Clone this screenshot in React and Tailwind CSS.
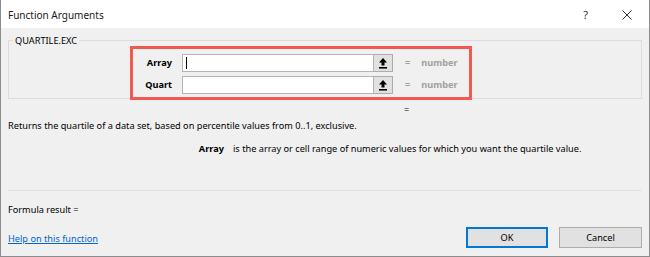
import React from "react";

function UploadIcon() {
  return (
    <svg width="8" height="11" viewBox="0 0 8 11">
      <path d="M4 0 L8 4.5 H5.5 V7.5 H2.5 V4.5 H0 Z" fill="#000" />
      <rect x="0" y="9" width="8" height="1.6" fill="#000" />
    </svg>
  );
}

function ArgRow({ label, cursor }) {
  return (
    <div className="flex items-center h-[18px]">
      <div className="w-[39px] text-right font-bold text-[9.2px] text-black">{label}</div>
      <div className="ml-[10px] flex h-[18px]">
        <div className="w-[192px] h-full bg-white border border-[#b4b4b4] flex items-center">
          {cursor && <span className="ml-[3px] w-px h-[12px] bg-black" />}
        </div>
        <div className="w-[19px] h-full bg-[#e1e1e1] border border-[#adadad] border-l-0 flex items-center justify-center">
          <UploadIcon />
        </div>
      </div>
      <span className="ml-[12px] text-[9.2px] font-bold text-[#a0a0a0]">=</span>
      <span className="ml-[11px] text-[9.2px] font-bold text-[#a0a0a0]">number</span>
    </div>
  );
}

export default function App() {
  return (
    <div
      className="w-[650px] h-[257px] bg-[#f0f0f0] border-x border-b border-[#8c8c8c] flex flex-col text-[9.2px] text-black overflow-hidden"
      style={{ fontFamily: '"Noto Sans", "Open Sans", Arial, sans-serif' }}
    >
      {/* title bar */}
      <div className="h-[28px] bg-white flex items-center pl-[7px] pt-[2px] shrink-0">
        <span className="text-[10px] text-[#1a1a1a]">Function Arguments</span>
        <span className="ml-auto text-[11px] text-[#333] mr-[34px]">?</span>
        <svg className="mr-[17px]" width="10" height="10" viewBox="0 0 10 10">
          <path d="M0.5 0.5 L9.5 9.5 M9.5 0.5 L0.5 9.5" stroke="#333" strokeWidth="1" />
        </svg>
      </div>

      <div className="px-[7px] flex flex-col flex-1">
        {/* group box */}
        <div className="relative mt-[12px] h-[59px] border border-[#dcdcdc]">
          <span className="absolute -top-[6px] left-[4px] px-[2px] bg-[#f0f0f0] leading-[12px] text-[9.2px]">
            QUARTILE.EXC
          </span>
          <div className="ml-[121px] mt-[5px] w-[342px] h-[54px] border-[3px] border-[#f15a52] pt-[5px] flex flex-col gap-[4px]">
            <ArgRow label="Array" cursor />
            <ArgRow label="Quart" />
          </div>
        </div>

        <div className="mt-[3px] leading-[16px] pl-[396px]">=</div>
        <div className="leading-[16px]">
          Returns the quartile of a data set, based on percentile values from 0..1, exclusive.
        </div>
        <div className="mt-[7px] leading-[16px] flex">
          <span className="w-[216px] text-right font-bold">Array</span>
          <span className="ml-[9px]">
            is the array or cell range of numeric values for which you want the quartile value.
          </span>
        </div>

        <div className="mt-[33px] h-px bg-[#e2e2e2]" />

        <div className="mt-[11px] leading-[16px]">Formula result =</div>

        <div className="mt-[9px] flex items-center">
          <a href="#" className="text-[#0066cc] underline leading-[16px] mt-[2px]">
            Help on this function
          </a>
          <div className="ml-auto flex gap-[11px]">
            <button className="w-[82px] h-[21px] bg-[#e1e1e1] border border-[#0078d7] outline outline-1 -outline-offset-2 outline-[#0078d7] text-[9.2px]">
              OK
            </button>
            <button className="w-[83px] h-[21px] bg-[#e1e1e1] border border-[#adadad] text-[9.2px]">
              Cancel
            </button>
          </div>
        </div>
      </div>
    </div>
  );
}
